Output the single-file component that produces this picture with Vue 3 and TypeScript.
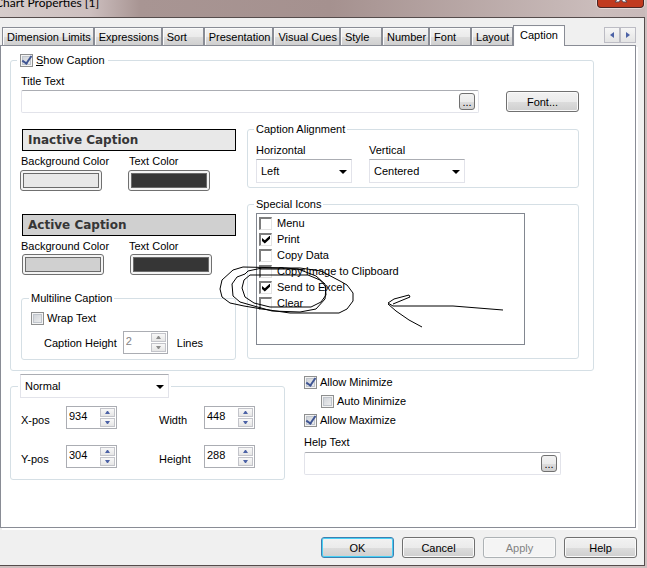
<script setup lang="ts">
import { ref } from 'vue'

const tabs = ['Dimension Limits', 'Expressions', 'Sort', 'Presentation', 'Visual Cues', 'Style', 'Number', 'Font', 'Layout', 'Caption']
const activeTab = ref('Caption')

const showCaption = ref(true)
const titleText = ref('')
const helpText = ref('')
const horizontal = ref('Left')
const vertical = ref('Centered')
const wrapText = ref(false)
const captionHeight = ref('2')
const windowState = ref('Normal')
const allowMinimize = ref(true)
const autoMinimize = ref(false)
const allowMaximize = ref(true)

const captions = [
  { id: 'inactive', title: 'Inactive Caption' },
  { id: 'active', title: 'Active Caption' },
]

const icons = ref([
  { label: 'Menu', on: false },
  { label: 'Print', on: true },
  { label: 'Copy Data', on: false },
  { label: 'Copy Image to Clipboard', on: false },
  { label: 'Send to Excel', on: true },
  { label: 'Clear', on: false },
])

const bounds = ref([
  { id: 'xpos', label: 'X-pos', value: '934' },
  { id: 'width', label: 'Width', value: '448' },
  { id: 'ypos', label: 'Y-pos', value: '304' },
  { id: 'height', label: 'Height', value: '288' },
])
</script>

<template>
  <div class="window">
    <header class="titlebar">
      <span class="title">Chart Properties [1]</span>
      <button class="close" type="button" aria-label="Close">
        <svg width="14" height="12" viewBox="0 0 14 12"><path d="M1 1h4l2 3 2-3h4L9 6l4 5H9L7 8l-2 3H1l4-5z" fill="#fff" stroke="#5a4a55" /></svg>
      </button>
    </header>

    <main class="client">
      <nav class="tabs" role="tablist">
        <button
          v-for="tab in tabs"
          :key="tab"
          type="button"
          role="tab"
          class="tab"
          :class="{ active: tab === activeTab }"
          :aria-selected="tab === activeTab"
          @click="activeTab = tab"
        >{{ tab }}</button>
        <span class="scroller">
          <button type="button" aria-label="Previous tabs"><svg width="4" height="6" viewBox="0 0 4 6"><path d="M4 0v6L0 3z" /></svg></button>
          <button type="button" aria-label="Next tabs"><svg width="4" height="6" viewBox="0 0 4 6"><path d="M0 0v6l4-3z" /></svg></button>
        </span>
      </nav>

      <section class="panel">
        <fieldset class="group main-group">
          <legend>
            <label class="check"><input v-model="showCaption" type="checkbox"><span><u>S</u>how Caption</span></label>
          </legend>
          <label class="text" for="title-text">Title Text</label>
          <div class="title-row">
            <div class="field">
              <input id="title-text" v-model="titleText" type="text">
              <button type="button" class="more">...</button>
            </div>
            <button type="button" class="push">Font...</button>
          </div>

          <div class="columns">
            <div class="left">
              <div v-for="c in captions" :key="c.id" class="caption-set" :class="c.id">
                <div class="sample">{{ c.title }}</div>
                <div class="swatches">
                  <div>
                    <label class="text" :for="c.id + '-bg'">Background Color</label>
                    <button :id="c.id + '-bg'" type="button" class="swatch"><i class="bg"></i></button>
                  </div>
                  <div>
                    <label class="text" :for="c.id + '-fg'">Text Color</label>
                    <button :id="c.id + '-fg'" type="button" class="swatch"><i class="fg"></i></button>
                  </div>
                </div>
              </div>

              <fieldset class="group multiline">
                <legend>Multiline Caption</legend>
                <label class="check"><input v-model="wrapText" type="checkbox">Wrap Text</label>
                <div class="height-row">
                  <label for="caption-height">Caption Height</label>
                  <span class="spinner off">
                    <input id="caption-height" v-model="captionHeight" type="text" disabled>
                    <span class="steps">
                      <button type="button" disabled aria-label="Increase"><svg width="5" height="3" viewBox="0 0 5 3"><path d="M0 3h5L3 0H2z" /></svg></button>
                      <button type="button" disabled aria-label="Decrease"><svg width="5" height="3" viewBox="0 0 5 3"><path d="M0 0h5L3 3H2z" /></svg></button>
                    </span>
                  </span>
                  <span class="unit">Lines</span>
                </div>
              </fieldset>
            </div>

            <div class="right">
              <fieldset class="group alignment">
                <legend>Caption Alignment</legend>
                <div>
                  <label class="text" for="horizontal">Horizontal</label>
                  <span class="drop">
                    <select id="horizontal" v-model="horizontal"><option>Left</option><option>Center</option><option>Right</option></select>
                  </span>
                </div>
                <div>
                  <label class="text" for="vertical">Vertical</label>
                  <span class="drop">
                    <select id="vertical" v-model="vertical"><option>Top</option><option>Centered</option><option>Bottom</option></select>
                  </span>
                </div>
              </fieldset>

              <fieldset class="group special">
                <legend>Special Icons</legend>
                <div class="list">
                  <label v-for="icon in icons" :key="icon.label" class="item">
                    <input v-model="icon.on" type="checkbox">{{ icon.label }}
                  </label>
                  <svg class="ink" width="320" height="90" viewBox="210 255 320 90" aria-hidden="true">
                    <path d="M305 270L286 268L243 267L233 270L222 280L220 289L222 297L230 303L244 306L262 309L290 313L339 313L347 309L353 301L353 293L347 285L340 281L321 271L300 268L262 268L248 271L245 274L237 277L232 284L233 296L240 302L254 306L272 311L300 312L316 309L325 299L326 287L320 280L308 275L250 275L244 280L242 288L245 297L254 303L270 307L311 307L321 302L326 295L325 284L316 276L298 269L260 269" />
                    <path d="M503 310L478 308L453 306L393 306L388 303L394 299L409 295L410 297L393 304M388 304L396 311L409 320L422 327" />
                  </svg>
                </div>
              </fieldset>
            </div>
          </div>
        </fieldset>

        <div class="lower">
          <fieldset class="group bounds">
            <legend>
              <span class="drop">
                <select v-model="windowState" aria-label="Window state"><option>Normal</option><option>Minimized</option><option>Maximized</option></select>
              </span>
            </legend>
            <div class="bounds-grid">
              <div v-for="b in bounds" :key="b.id" class="bound">
                <label :for="b.id">{{ b.label }}</label>
                <span class="spinner">
                  <input :id="b.id" v-model="b.value" type="text">
                  <span class="steps">
                    <button type="button" aria-label="Increase"><svg width="5" height="3" viewBox="0 0 5 3"><path d="M0 3h5L3 0H2z" /></svg></button>
                    <button type="button" aria-label="Decrease"><svg width="5" height="3" viewBox="0 0 5 3"><path d="M0 0h5L3 3H2z" /></svg></button>
                  </span>
                </span>
              </div>
            </div>
          </fieldset>

          <div class="options">
            <label class="check"><input v-model="allowMinimize" type="checkbox">Allow Minimize</label>
            <label class="check nested"><input v-model="autoMinimize" type="checkbox">Auto Minimize</label>
            <label class="check"><input v-model="allowMaximize" type="checkbox">Allow Maximize</label>
            <label class="text" for="help-text">Help Text</label>
            <div class="field">
              <input id="help-text" v-model="helpText" type="text">
              <button type="button" class="more">...</button>
            </div>
          </div>
        </div>
      </section>

      <footer class="actions">
        <button type="button" class="push primary">OK</button>
        <button type="button" class="push">Cancel</button>
        <button type="button" class="push" disabled>Apply</button>
        <button type="button" class="push">Help</button>
      </footer>
    </main>
  </div>
</template>

<style>
body {
  margin: 0;
}
</style>

<style scoped>
.window,
.window * {
  box-sizing: border-box;
}
.window {
  display: flex;
  flex-direction: column;
  min-height: 100vh;
  padding: 0 2px 2px 0;
  background: #cdbfbf;
  color: #000;
  font: 11px/14px "Liberation Sans", Arial, sans-serif;
}
button,
input,
select {
  margin: 0;
  padding: 0;
  border: 0;
  background: none;
  color: inherit;
  font: inherit;
}
.titlebar {
  display: flex;
  justify-content: space-between;
  height: 17px;
  overflow: hidden;
  background: linear-gradient(90deg, #d6cccb 0, #cdbfbf 90px, #a89593 140px, #a5918f 330px, #cbbdbc 600px, #c9baba 100%);
}
.title {
  margin: -6px 0 0 -5px;
  font: 12px/18px Lato, "Open Sans", sans-serif;
}
.close {
  display: flex;
  align-items: flex-end;
  justify-content: center;
  width: 47px;
  height: 8px;
  margin-right: 1px;
  padding-bottom: 4px;
  border: 1px solid #4c2523;
  border-top: 0;
  border-radius: 0 0 4px 4px;
  background: #c13a1f;
  box-shadow: 0 0 0 1px #e5d8d6;
}
.client {
  display: flex;
  flex: 1;
  flex-direction: column;
  border: 1px solid #554c4c;
  border-left: 0;
  background: #f0f0f0;
}
.tabs {
  display: flex;
  align-items: flex-end;
  height: 27px;
  padding-left: 2px;
}
.tab {
  min-width: 42px;
  height: 18px;
  padding: 0 2px 0 4px;
  border: 1px solid #898c95;
  border-bottom: 0;
  background: linear-gradient(#f3f3f3, #ebebeb 50%, #dddddd 51%, #cfcfcf);
  box-shadow: inset 1px 1px #fbfbfb;
  text-align: left;
  white-space: nowrap;
}
.tab.active {
  z-index: 1;
  height: 21px;
  margin-bottom: -1px;
  padding: 0 6px 2px;
  background: #fff;
}
.scroller {
  display: flex;
  margin: 0 8px 2px auto;
}
.scroller button {
  display: flex;
  align-items: center;
  justify-content: center;
  width: 16px;
  height: 16px;
  border: 1px solid #bcbcc4;
  background: linear-gradient(#f6f6f6, #e4e4e4);
}
.scroller path,
.steps path {
  fill: #4c62a6;
}
.panel {
  flex: 1;
  margin-right: 8px;
  padding: 7px 41px 0 9px;
  border: 1px solid #898c95;
  background: #fff;
  box-shadow: 2px 2px #fff;
}
.group {
  min-width: 0;
  margin: 0;
  padding: 0;
  border: 1px solid #d5dfe5;
  border-radius: 3px;
}
.group > legend {
  margin-left: -2px;
  padding: 0 2px;
}
.text {
  display: block;
}
.check {
  display: flex;
  align-items: center;
  gap: 3px;
}
.check input {
  appearance: none;
  display: grid;
  place-items: center;
  width: 13px;
  height: 13px;
  border: 1px solid #8e8f8f;
  background: linear-gradient(135deg, #c9cdd3, #f3f3f3);
  box-shadow: inset 0 0 0 1px #f4f4f4, inset 0 0 0 2px #c0c5cc;
}
.check input:checked::before {
  content: "";
  width: 4px;
  height: 8px;
  margin-top: -2px;
  border: solid #3f5593;
  border-width: 0 2px 2px 0;
  transform: rotate(35deg);
}
.main-group {
  padding: 7px 14px 10px 10px;
}
.main-group > legend {
  margin-left: -4px;
  padding: 0 3px;
}
.title-row {
  display: flex;
  align-items: center;
  gap: 27px;
  margin-top: 2px;
}
.field {
  display: flex;
  flex: 1;
  align-items: center;
  height: 23px;
  padding-right: 3px;
  border: 1px solid #e2e3ea;
  border-top-color: #abadb3;
  border-radius: 2px;
  background: #fff;
}
.field input {
  flex: 1;
  min-width: 0;
  padding: 0 4px;
}
.more {
  width: 16px;
  height: 17px;
  border: 1px solid #707070;
  border-radius: 3px;
  background: linear-gradient(#f2f2f2, #ebebeb 50%, #dddddd 51%, #cfcfcf);
}
.push {
  width: 73px;
  height: 21px;
  border: 1px solid #707070;
  border-radius: 3px;
  background: linear-gradient(#f2f2f2, #ebebeb 50%, #dddddd 51%, #cfcfcf);
  box-shadow: inset 0 0 0 1px #fafafa;
}
.push.primary {
  border-color: #3c7fb1;
  box-shadow: inset 0 0 0 1px #48d0f5;
}
.push:disabled {
  border-color: #adb2b5;
  background: #f4f4f4;
  color: #838383;
}
.columns {
  display: flex;
  gap: 11px;
  margin-top: 9px;
}
.left {
  width: 215px;
  padding-top: 7px;
}
.caption-set {
  height: 85px;
}
.sample {
  height: 22px;
  margin-left: 1px;
  padding-left: 5px;
  border: 1px solid #000;
  background: #e8e8e8;
  color: #363636;
  font: bold 12px/20px "DejaVu Sans", Verdana, sans-serif;
}
.active .sample {
  background: #d0d0d0;
}
.swatches {
  display: grid;
  grid-template-columns: 108px 1fr;
  margin-top: 3px;
}
.swatch {
  display: flex;
  width: 82px;
  height: 21px;
  margin: 2px 0 0 -1px;
  padding: 2px;
  border: 1px solid #707070;
  border-radius: 3px;
  background: #f4f4f4;
}
.active .swatch {
  margin: 1px 0 0 1px;
}
.swatch i {
  flex: 1;
  align-self: stretch;
  border: 1px solid #6b6b6b;
  background: #e8e8e8;
}
.active .swatch .bg {
  background: #d0d0d0;
}
.swatch .fg {
  background: #363636;
}
.multiline {
  margin-top: -8px;
  padding: 6px 9px 5px;
}
.height-row {
  display: flex;
  align-items: center;
  gap: 6px;
  margin: 6px 0 0 13px;
}
.unit {
  padding-left: 3px;
}
.spinner {
  display: flex;
  width: 51px;
  height: 23px;
  border: 1px solid #abadb3;
  background: #fff;
}
.spinner > input {
  flex: 1;
  min-width: 0;
  padding: 0 0 3px 2px;
}
.spinner.off {
  width: 45px;
  color: #838383;
}
.steps {
  display: flex;
  flex-direction: column;
  gap: 1px;
  padding: 1px;
}
.steps button {
  display: flex;
  flex: 1;
  align-items: center;
  justify-content: center;
  width: 15px;
  border: 1px solid #c3c4ca;
  background: linear-gradient(#f8f8f8, #e6e6e6);
}
.off path {
  fill: #8c8c8c;
}
.right {
  flex: 1;
  min-width: 0;
}
.alignment {
  display: grid;
  grid-template-columns: 96px 96px;
  column-gap: 17px;
  padding: 7px 8px 4px;
}
.drop {
  display: block;
  position: relative;
  margin-top: 2px;
}
.drop select {
  appearance: none;
  display: block;
  width: 100%;
  height: 24px;
  padding: 0 20px 0 4px;
  border: 1px solid #e2e3ea;
  border-top-color: #abadb3;
  background: #fff;
}
.drop::after {
  content: "";
  position: absolute;
  top: 11px;
  right: 5px;
  border: 4px solid transparent;
  border-top-color: #000;
  border-bottom: 0;
  pointer-events: none;
}
.special {
  margin-top: 9px;
  padding: 2px 53px 13px 8px;
}
.list {
  position: relative;
  height: 132px;
  padding: 1px 2px;
  border: 1px solid #828790;
}
.item {
  display: flex;
  align-items: center;
  gap: 5px;
  height: 16px;
}
.item input {
  appearance: none;
  display: grid;
  place-items: center;
  width: 13px;
  height: 13px;
  border: 1px solid #e3e3e3;
  border-top: 2px solid #7d7d7d;
  border-left: 2px solid #7d7d7d;
  background: #fff;
}
.item input:checked::before {
  content: "";
  width: 8px;
  height: 8px;
  background: #000;
  clip-path: polygon(0 30%, 35% 60%, 100% 0, 100% 40%, 35% 100%, 0 70%);
}
.ink {
  position: absolute;
  top: 41px;
  left: -47px;
  fill: none;
  stroke: #000;
  pointer-events: none;
}
.lower {
  display: flex;
  gap: 19px;
  margin-top: 3px;
}
.bounds {
  width: 275px;
  padding: 8px 10px 11px;
}
.bounds > legend {
  width: 153px;
  margin-left: -3px;
}
.bounds .drop {
  margin: 0;
}
.bounds-grid {
  display: grid;
  grid-template-columns: 138px 1fr;
  row-gap: 16px;
}
.bound {
  display: grid;
  grid-template-columns: 45px 51px;
  align-items: center;
}
.bound label {
  padding-top: 4px;
}
.options {
  flex: 1;
  padding: 1px 33px 0 0;
}
.options .check {
  margin-bottom: 5px;
}
.options .nested {
  margin-left: 17px;
}
.options .text {
  margin-top: 8px;
}
.options .field {
  margin-top: 3px;
}
.actions {
  display: flex;
  justify-content: flex-end;
  gap: 8px;
  padding: 9px 7px 7px;
}
</style>
